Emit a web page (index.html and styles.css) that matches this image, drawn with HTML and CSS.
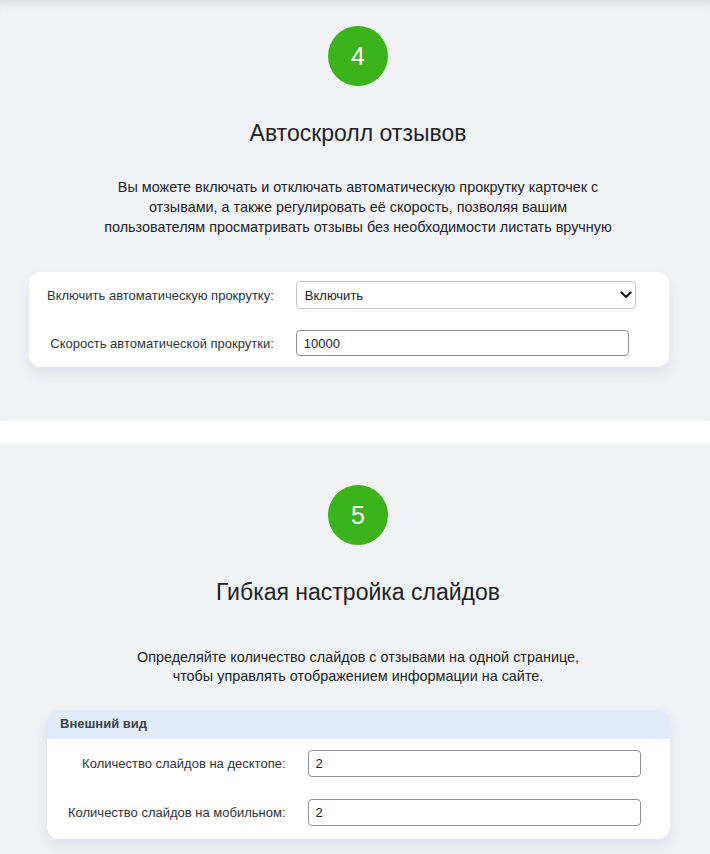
FILE: index.html
```html
<!DOCTYPE html>
<html lang="ru">
<head>
    <meta charset="UTF-8">
    <meta name="viewport" content="width=device-width, initial-scale=1.0">
    <title>Настройки отзывов</title>
    <link rel="stylesheet" href="styles.css">
</head>
<body>
    <section class="step step-first">
        <div class="step-num">4</div>
        <h2 class="step-title">Автоскролл отзывов</h2>
        <p class="step-text">Вы можете включать и отключать автоматическую прокрутку карточек с<br>отзывами, а также регулировать её скорость, позволяя вашим<br>пользователям просматривать отзывы без необходимости листать вручную</p>

        <div class="card card-autoscroll">
            <div class="form-grid">
                <label class="form-label" for="autoscroll">Включить автоматическую прокрутку:</label>
                <div class="select-wrap">
                    <select id="autoscroll" class="form-select">
                        <option>Включить</option>
                        <option>Выключить</option>
                    </select>
                    <svg class="select-arrow" width="12" height="8" viewBox="0 0 12 8">
                        <path d="M1.5 1.5 L6 6 L10.5 1.5" fill="none" stroke="#1d2327" stroke-width="2.4" stroke-linecap="round" stroke-linejoin="round"/>
                    </svg>
                </div>

                <label class="form-label" for="speed">Скорость автоматической прокрутки:</label>
                <input id="speed" class="form-input input-short" type="text" value="10000">
            </div>
        </div>
    </section>

    <section class="step step-second">
        <div class="step-num">5</div>
        <h2 class="step-title">Гибкая настройка слайдов</h2>
        <p class="step-text">Определяйте количество слайдов с отзывами на одной странице,<br>чтобы управлять отображением информации на сайте.</p>

        <div class="card card-slides">
            <div class="card-head">Внешний вид</div>
            <div class="form-grid">
                <label class="form-label" for="desktop">Количество слайдов на десктопе:</label>
                <input id="desktop" class="form-input" type="text" value="2">

                <label class="form-label" for="mobile">Количество слайдов на мобильном:</label>
                <input id="mobile" class="form-input" type="text" value="2">
            </div>
        </div>
    </section>
</body>
</html>
```

FILE: styles.css
```css
body {
    margin: 0;
    background-color: #fff;
    color: #1d2327;
    font-family: "Liberation Sans", Arial, sans-serif;
}

/* Step sections */
.step {
    background-color: #f1f2f4;
    padding: 42px 0 54px 6px;
    text-align: center;
}

.step-first {
    padding-top: 26px;
    margin-bottom: 22px;
    box-shadow: inset 0 8px 8px -6px rgba(0, 0, 0, 0.1);
}

.step-num {
    width: 60px;
    height: 60px;
    margin: 0 auto;
    border-radius: 50%;
    background-color: #3bb41c;
    color: #fff;
    font-size: 25px;
    line-height: 60px;
}

.step-title {
    margin: 34px 0 0;
    font-size: 23px;
    font-weight: normal;
    line-height: 26px;
    color: #1d2327;
}

.step-text {
    margin: 31px 0 0;
    font-size: 14.4px;
    line-height: 20px;
    color: #1d2327;
}

.step-second .step-text {
    margin-top: 43px;
    line-height: 19px;
}

/* Cards */
.card {
    background-color: #fff;
    border-radius: 12px;
    box-shadow: 0 6px 14px rgba(40, 70, 130, 0.09);
    text-align: left;
}

.card-autoscroll {
    width: 640px;
    margin: 35px 0 0 23px;
    padding: 9px 0 11px;
}

.card-autoscroll .form-grid {
    padding: 0 33px 0 18px;
    row-gap: 21px;
}

.card-slides {
    width: 623px;
    margin: 24px 0 0 41px;
    padding-bottom: 13px;
    overflow: hidden;
}

.card-slides .form-grid {
    padding: 11px 29px 0 21px;
    row-gap: 22px;
}

.card-head {
    height: 29px;
    padding-left: 13px;
    background-color: #e1ecf8;
    color: #3c434a;
    font-size: 13px;
    font-weight: bold;
    line-height: 27px;
}

/* Form rows */
.form-grid {
    display: grid;
    grid-template-columns: auto 1fr;
    column-gap: 22px;
    align-items: center;
}

.form-label {
    font-size: 13px;
    text-align: right;
    color: #2c3338;
}

.form-input,
.form-select {
    box-sizing: border-box;
    width: 100%;
    height: 27px;
    margin: 0;
    padding: 0 7px;
    border: 1px solid #8c8f94;
    border-radius: 4px;
    background-color: #fff;
    color: #1d2327;
    font-family: inherit;
    font-size: 13px;
}

.input-short {
    width: calc(100% - 7px);
    height: 26px;
}

.select-wrap {
    position: relative;
}

.form-select {
    height: 28px;
    padding-left: 8px;
    border-color: #c3c4c7;
    appearance: none;
    -webkit-appearance: none;
}

.select-arrow {
    position: absolute;
    top: 10px;
    right: 4px;
    pointer-events: none;
}
```
